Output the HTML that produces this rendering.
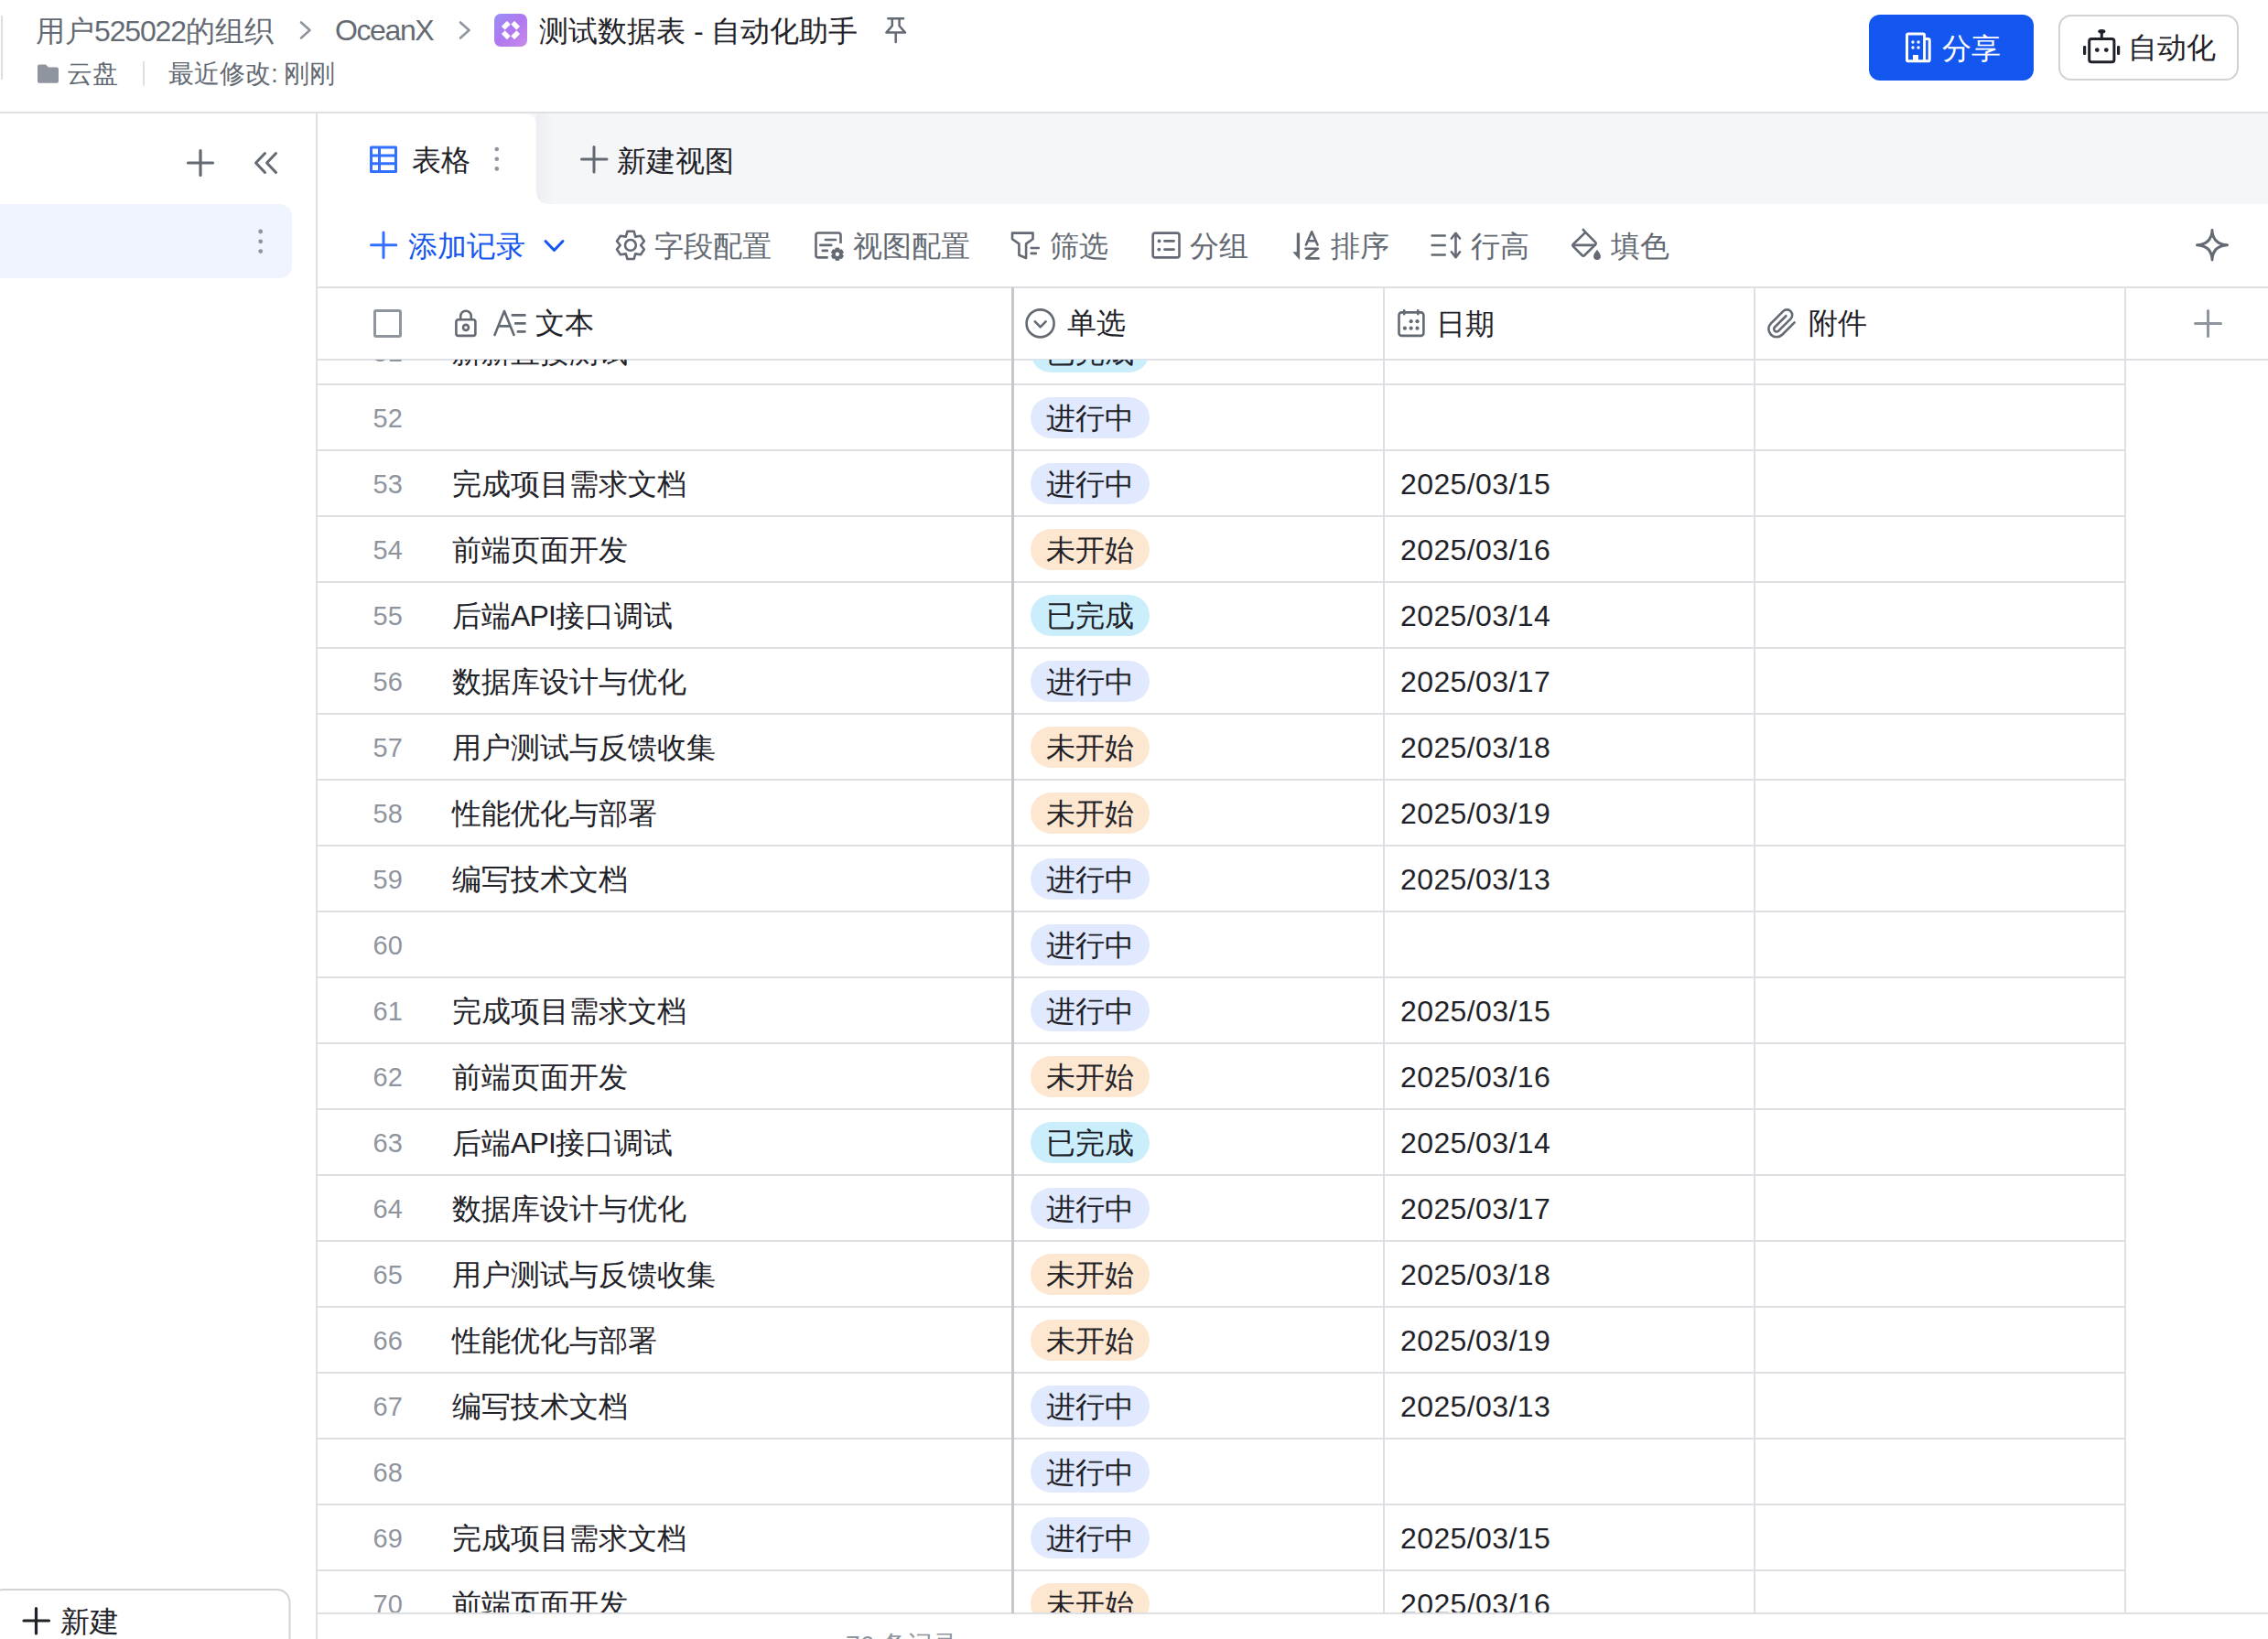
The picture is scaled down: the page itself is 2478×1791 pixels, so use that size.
<!DOCTYPE html>
<html><head><meta charset="utf-8">
<style>
html,body{margin:0;padding:0;background:#fff;}
body{width:2478px;height:1791px;position:relative;overflow:hidden;font-family:"Liberation Sans",sans-serif;}
.t{position:absolute;white-space:nowrap;}
svg{position:absolute;left:0;top:0;}
#bd{position:absolute;left:0;top:393px;width:2478px;height:1369px;overflow:hidden;}
.ln{position:absolute;left:347px;width:1975px;height:2px;background:#dee0e3;}
.tag{position:absolute;left:1125.5px;width:130.5px;height:45px;border-radius:22.5px;}
</style></head><body>
<svg width="2478" height="1791" viewBox="0 0 2478 1791">
<rect x="1" y="17" width="2" height="70" fill="#dee0e3"/><path d="M329 24.5 L338.5 33 L329 41.5" fill="none" stroke="#8f959e" stroke-width="2.6" stroke-linecap="round" stroke-linejoin="round"/><path d="M503 24.5 L512.5 33 L503 41.5" fill="none" stroke="#8f959e" stroke-width="2.6" stroke-linecap="round" stroke-linejoin="round"/><defs><linearGradient id="ag" x1="0" y1="0" x2="1" y2="1"><stop offset="0" stop-color="#9890f7"/><stop offset="0.5" stop-color="#b078f0"/><stop offset="1" stop-color="#c98aea"/></linearGradient></defs><rect x="540" y="15" width="36" height="36" rx="7" fill="url(#ag)"/><rect x="-4.3" y="-2.7" width="8.6" height="5.4" rx="0.6" fill="#fff" transform="translate(552.8 27.7) rotate(-45)"/><rect x="-4.3" y="-2.7" width="8.6" height="5.4" rx="0.6" fill="#fff" transform="translate(563.2 27.7) rotate(45)"/><rect x="-4.3" y="-2.7" width="8.6" height="5.4" rx="0.6" fill="#fff" transform="translate(552.8 38.3) rotate(45)"/><rect x="-4.3" y="-2.7" width="8.6" height="5.4" rx="0.6" fill="#fff" transform="translate(563.2 38.3) rotate(-45)"/><path d="M970.3 20.3 H987.1 M974.8 20.3 V28.2 L968.4 35.6 H989 L982.6 28.2 V20.3 M978.7 35.6 V46" fill="none" stroke="#646a73" stroke-width="2.5" stroke-linecap="round" stroke-linejoin="round"/><path d="M41 72.5 Q41 70.5 43 70.5 H50 L53 73.5 H62 Q64 73.5 64 75.5 V88.7 Q64 90.7 62 90.7 H43 Q41 90.7 41 88.7 Z" fill="#8f959e"/><rect x="156" y="67" width="2" height="26.5" fill="#dee0e3"/><rect x="2042" y="16" width="180" height="72" rx="12" fill="#1456f0"/><path d="M2083.5 66.8 V38.5 Q2083.5 36.9 2085.1 36.9 H2101 Q2102.6 36.9 2102.6 38.5 V66.8 M2102.6 42.5 H2106.6 Q2108.2 42.5 2108.2 44.1 V65.2 Q2108.2 66.8 2106.6 66.8 H2085.1 Q2083.5 66.8 2083.5 65.2" fill="none" stroke="#fff" stroke-width="3" stroke-linejoin="round"/><circle cx="2090" cy="46" r="1.7" fill="#fff"/><circle cx="2096" cy="46" r="1.7" fill="#fff"/><circle cx="2090" cy="52" r="1.7" fill="#fff"/><circle cx="2096" cy="52" r="1.7" fill="#fff"/><rect x="2090" y="60" width="6" height="7" fill="#fff"/><rect x="2250" y="17" width="195" height="70" rx="13" fill="#fff" stroke="#d0d3d6" stroke-width="2"/><rect x="2282.7" y="42.5" width="27.2" height="25.2" rx="2.5" fill="none" stroke="#1f2329" stroke-width="3"/><circle cx="2291.3" cy="54.6" r="2.4" fill="#1f2329"/><circle cx="2301.3" cy="54.6" r="2.4" fill="#1f2329"/><rect x="2294.8" y="35" width="3" height="7" fill="#1f2329"/><ellipse cx="2296.3" cy="34.3" rx="4" ry="2.4" fill="#1f2329"/><rect x="2276" y="50" width="3.2" height="10" rx="1.3" fill="#1f2329"/><rect x="2313" y="50" width="3.2" height="10" rx="1.3" fill="#1f2329"/><rect x="0" y="122" width="2478" height="2" fill="#dee0e3"/><rect x="345" y="124" width="2" height="1667" fill="#dee0e3"/><path d="M219 164.5 V191.5 M205.5 178 H232.5" fill="none" stroke="#646a73" stroke-width="3.2" stroke-linecap="round"/><path d="M289.5 167.5 L279.5 178 L289.5 188.5 M301.5 167.5 L291.5 178 L301.5 188.5" fill="none" stroke="#646a73" stroke-width="3" stroke-linecap="round" stroke-linejoin="round"/><rect x="-20" y="223" width="339" height="81" rx="13" fill="#eff4fe"/><circle cx="284.7" cy="253" r="2.4" fill="#8f959e"/><circle cx="284.7" cy="263.8" r="2.4" fill="#8f959e"/><circle cx="284.7" cy="274.6" r="2.4" fill="#8f959e"/><rect x="-10" y="1737" width="326.5" height="80" rx="14" fill="#fff" stroke="#d0d3d6" stroke-width="2"/><path d="M39.5 1757.5 V1785 M26 1771 H53.5" fill="none" stroke="#1f2329" stroke-width="3.2" stroke-linecap="round"/><defs><linearGradient id="sh" x1="0" y1="0" x2="1" y2="0"><stop offset="0" stop-color="#eceef1"/><stop offset="1" stop-color="#f5f6f7"/></linearGradient></defs><rect x="347" y="124" width="2131" height="99" fill="#f5f6f7"/><rect x="586" y="124" width="20" height="99" fill="url(#sh)"/><path d="M347 124 H571 Q586 124 586 139 V223 H347 Z" fill="#fff"/><path d="M586 208 Q586 223 601 223 H586 Z" fill="#fff"/><path d="M405.5 161 H432.5 V187.5 H405.5 Z M405.5 170 H432.5 M405.5 178.8 H432.5 M414.5 161 V187.5" fill="none" stroke="#3370ff" stroke-width="3" stroke-linejoin="round"/><circle cx="542.8" cy="163" r="2.3" fill="#8f959e"/><circle cx="542.8" cy="173.7" r="2.3" fill="#8f959e"/><circle cx="542.8" cy="184.4" r="2.3" fill="#8f959e"/><path d="M649 160.5 V188 M635.5 174 H663" fill="none" stroke="#646a73" stroke-width="3" stroke-linecap="round"/><path d="M419 254 V281.5 M405.5 267.8 H432.8" fill="none" stroke="#3370ff" stroke-width="3" stroke-linecap="round"/><path d="M596 263.5 L605.5 273.5 L615 263.5" fill="none" stroke="#1456f0" stroke-width="3" stroke-linecap="round" stroke-linejoin="round"/><rect x="347" y="313" width="2131" height="2" fill="#dee0e3"/><rect x="347" y="392" width="2131" height="2" fill="#dee0e3"/><rect x="409.5" y="339.5" width="28" height="28" rx="1.5" fill="none" stroke="#8f959e" stroke-width="3"/><path d="M2412.5 339.5 V367.5 M2398.5 353.5 H2426.5" fill="none" stroke="#8f959e" stroke-width="3" stroke-linecap="round"/><rect x="347" y="1762" width="2131" height="2" fill="#dee0e3"/>
</svg>
<div id="bd">
<div class="ln" style="top:26px"></div><div class="t" style="left:407.5px;top:-22px;font-size:29px;line-height:29px;color:#8f959e">51</div><div class="t" style="left:494px;top:-24px;font-size:32px;line-height:32px;color:#1f2329">新新直接测试</div><div class="tag" style="top:-31px;background:#caeefb"></div><div class="t" style="left:1143px;top:-24px;font-size:32px;line-height:32px;color:#1f2329">已完成</div><div class="ln" style="top:98px"></div><div class="t" style="left:407.5px;top:50px;font-size:29px;line-height:29px;color:#8f959e">52</div><div class="tag" style="top:41px;background:#e0e9fd"></div><div class="t" style="left:1143px;top:48px;font-size:32px;line-height:32px;color:#1f2329">进行中</div><div class="ln" style="top:170px"></div><div class="t" style="left:407.5px;top:122px;font-size:29px;line-height:29px;color:#8f959e">53</div><div class="t" style="left:494px;top:120px;font-size:32px;line-height:32px;color:#1f2329">完成项目需求文档</div><div class="tag" style="top:113px;background:#e0e9fd"></div><div class="t" style="left:1143px;top:120px;font-size:32px;line-height:32px;color:#1f2329">进行中</div><div class="t" style="left:1530px;top:120px;font-size:32px;line-height:32px;letter-spacing:0.4px;color:#1f2329">2025/03/15</div><div class="ln" style="top:242px"></div><div class="t" style="left:407.5px;top:194px;font-size:29px;line-height:29px;color:#8f959e">54</div><div class="t" style="left:494px;top:192px;font-size:32px;line-height:32px;color:#1f2329">前端页面开发</div><div class="tag" style="top:185px;background:#fee7d0"></div><div class="t" style="left:1143px;top:192px;font-size:32px;line-height:32px;color:#1f2329">未开始</div><div class="t" style="left:1530px;top:192px;font-size:32px;line-height:32px;letter-spacing:0.4px;color:#1f2329">2025/03/16</div><div class="ln" style="top:314px"></div><div class="t" style="left:407.5px;top:266px;font-size:29px;line-height:29px;color:#8f959e">55</div><div class="t" style="left:494px;top:264px;font-size:32px;line-height:32px;color:#1f2329">后端<span style="letter-spacing:-0.9px">API</span>接口调试</div><div class="tag" style="top:257px;background:#caeefb"></div><div class="t" style="left:1143px;top:264px;font-size:32px;line-height:32px;color:#1f2329">已完成</div><div class="t" style="left:1530px;top:264px;font-size:32px;line-height:32px;letter-spacing:0.4px;color:#1f2329">2025/03/14</div><div class="ln" style="top:386px"></div><div class="t" style="left:407.5px;top:338px;font-size:29px;line-height:29px;color:#8f959e">56</div><div class="t" style="left:494px;top:336px;font-size:32px;line-height:32px;color:#1f2329">数据库设计与优化</div><div class="tag" style="top:329px;background:#e0e9fd"></div><div class="t" style="left:1143px;top:336px;font-size:32px;line-height:32px;color:#1f2329">进行中</div><div class="t" style="left:1530px;top:336px;font-size:32px;line-height:32px;letter-spacing:0.4px;color:#1f2329">2025/03/17</div><div class="ln" style="top:458px"></div><div class="t" style="left:407.5px;top:410px;font-size:29px;line-height:29px;color:#8f959e">57</div><div class="t" style="left:494px;top:408px;font-size:32px;line-height:32px;color:#1f2329">用户测试与反馈收集</div><div class="tag" style="top:401px;background:#fee7d0"></div><div class="t" style="left:1143px;top:408px;font-size:32px;line-height:32px;color:#1f2329">未开始</div><div class="t" style="left:1530px;top:408px;font-size:32px;line-height:32px;letter-spacing:0.4px;color:#1f2329">2025/03/18</div><div class="ln" style="top:530px"></div><div class="t" style="left:407.5px;top:482px;font-size:29px;line-height:29px;color:#8f959e">58</div><div class="t" style="left:494px;top:480px;font-size:32px;line-height:32px;color:#1f2329">性能优化与部署</div><div class="tag" style="top:473px;background:#fee7d0"></div><div class="t" style="left:1143px;top:480px;font-size:32px;line-height:32px;color:#1f2329">未开始</div><div class="t" style="left:1530px;top:480px;font-size:32px;line-height:32px;letter-spacing:0.4px;color:#1f2329">2025/03/19</div><div class="ln" style="top:602px"></div><div class="t" style="left:407.5px;top:554px;font-size:29px;line-height:29px;color:#8f959e">59</div><div class="t" style="left:494px;top:552px;font-size:32px;line-height:32px;color:#1f2329">编写技术文档</div><div class="tag" style="top:545px;background:#e0e9fd"></div><div class="t" style="left:1143px;top:552px;font-size:32px;line-height:32px;color:#1f2329">进行中</div><div class="t" style="left:1530px;top:552px;font-size:32px;line-height:32px;letter-spacing:0.4px;color:#1f2329">2025/03/13</div><div class="ln" style="top:674px"></div><div class="t" style="left:407.5px;top:626px;font-size:29px;line-height:29px;color:#8f959e">60</div><div class="tag" style="top:617px;background:#e0e9fd"></div><div class="t" style="left:1143px;top:624px;font-size:32px;line-height:32px;color:#1f2329">进行中</div><div class="ln" style="top:746px"></div><div class="t" style="left:407.5px;top:698px;font-size:29px;line-height:29px;color:#8f959e">61</div><div class="t" style="left:494px;top:696px;font-size:32px;line-height:32px;color:#1f2329">完成项目需求文档</div><div class="tag" style="top:689px;background:#e0e9fd"></div><div class="t" style="left:1143px;top:696px;font-size:32px;line-height:32px;color:#1f2329">进行中</div><div class="t" style="left:1530px;top:696px;font-size:32px;line-height:32px;letter-spacing:0.4px;color:#1f2329">2025/03/15</div><div class="ln" style="top:818px"></div><div class="t" style="left:407.5px;top:770px;font-size:29px;line-height:29px;color:#8f959e">62</div><div class="t" style="left:494px;top:768px;font-size:32px;line-height:32px;color:#1f2329">前端页面开发</div><div class="tag" style="top:761px;background:#fee7d0"></div><div class="t" style="left:1143px;top:768px;font-size:32px;line-height:32px;color:#1f2329">未开始</div><div class="t" style="left:1530px;top:768px;font-size:32px;line-height:32px;letter-spacing:0.4px;color:#1f2329">2025/03/16</div><div class="ln" style="top:890px"></div><div class="t" style="left:407.5px;top:842px;font-size:29px;line-height:29px;color:#8f959e">63</div><div class="t" style="left:494px;top:840px;font-size:32px;line-height:32px;color:#1f2329">后端<span style="letter-spacing:-0.9px">API</span>接口调试</div><div class="tag" style="top:833px;background:#caeefb"></div><div class="t" style="left:1143px;top:840px;font-size:32px;line-height:32px;color:#1f2329">已完成</div><div class="t" style="left:1530px;top:840px;font-size:32px;line-height:32px;letter-spacing:0.4px;color:#1f2329">2025/03/14</div><div class="ln" style="top:962px"></div><div class="t" style="left:407.5px;top:914px;font-size:29px;line-height:29px;color:#8f959e">64</div><div class="t" style="left:494px;top:912px;font-size:32px;line-height:32px;color:#1f2329">数据库设计与优化</div><div class="tag" style="top:905px;background:#e0e9fd"></div><div class="t" style="left:1143px;top:912px;font-size:32px;line-height:32px;color:#1f2329">进行中</div><div class="t" style="left:1530px;top:912px;font-size:32px;line-height:32px;letter-spacing:0.4px;color:#1f2329">2025/03/17</div><div class="ln" style="top:1034px"></div><div class="t" style="left:407.5px;top:986px;font-size:29px;line-height:29px;color:#8f959e">65</div><div class="t" style="left:494px;top:984px;font-size:32px;line-height:32px;color:#1f2329">用户测试与反馈收集</div><div class="tag" style="top:977px;background:#fee7d0"></div><div class="t" style="left:1143px;top:984px;font-size:32px;line-height:32px;color:#1f2329">未开始</div><div class="t" style="left:1530px;top:984px;font-size:32px;line-height:32px;letter-spacing:0.4px;color:#1f2329">2025/03/18</div><div class="ln" style="top:1106px"></div><div class="t" style="left:407.5px;top:1058px;font-size:29px;line-height:29px;color:#8f959e">66</div><div class="t" style="left:494px;top:1056px;font-size:32px;line-height:32px;color:#1f2329">性能优化与部署</div><div class="tag" style="top:1049px;background:#fee7d0"></div><div class="t" style="left:1143px;top:1056px;font-size:32px;line-height:32px;color:#1f2329">未开始</div><div class="t" style="left:1530px;top:1056px;font-size:32px;line-height:32px;letter-spacing:0.4px;color:#1f2329">2025/03/19</div><div class="ln" style="top:1178px"></div><div class="t" style="left:407.5px;top:1130px;font-size:29px;line-height:29px;color:#8f959e">67</div><div class="t" style="left:494px;top:1128px;font-size:32px;line-height:32px;color:#1f2329">编写技术文档</div><div class="tag" style="top:1121px;background:#e0e9fd"></div><div class="t" style="left:1143px;top:1128px;font-size:32px;line-height:32px;color:#1f2329">进行中</div><div class="t" style="left:1530px;top:1128px;font-size:32px;line-height:32px;letter-spacing:0.4px;color:#1f2329">2025/03/13</div><div class="ln" style="top:1250px"></div><div class="t" style="left:407.5px;top:1202px;font-size:29px;line-height:29px;color:#8f959e">68</div><div class="tag" style="top:1193px;background:#e0e9fd"></div><div class="t" style="left:1143px;top:1200px;font-size:32px;line-height:32px;color:#1f2329">进行中</div><div class="ln" style="top:1322px"></div><div class="t" style="left:407.5px;top:1274px;font-size:29px;line-height:29px;color:#8f959e">69</div><div class="t" style="left:494px;top:1272px;font-size:32px;line-height:32px;color:#1f2329">完成项目需求文档</div><div class="tag" style="top:1265px;background:#e0e9fd"></div><div class="t" style="left:1143px;top:1272px;font-size:32px;line-height:32px;color:#1f2329">进行中</div><div class="t" style="left:1530px;top:1272px;font-size:32px;line-height:32px;letter-spacing:0.4px;color:#1f2329">2025/03/15</div><div class="ln" style="top:1394px"></div><div class="t" style="left:407.5px;top:1346px;font-size:29px;line-height:29px;color:#8f959e">70</div><div class="t" style="left:494px;top:1344px;font-size:32px;line-height:32px;color:#1f2329">前端页面开发</div><div class="tag" style="top:1337px;background:#fee7d0"></div><div class="t" style="left:1143px;top:1344px;font-size:32px;line-height:32px;color:#1f2329">未开始</div><div class="t" style="left:1530px;top:1344px;font-size:32px;line-height:32px;letter-spacing:0.4px;color:#1f2329">2025/03/16</div>
</div>
<svg width="2478" height="1791" viewBox="0 0 2478 1791" style="pointer-events:none">
<rect x="1105" y="314" width="3" height="1449" fill="#c4c7cc"/><rect x="1511" y="314" width="2" height="1449" fill="#dee0e3"/><rect x="1916" y="314" width="2" height="1449" fill="#dee0e3"/><rect x="2321" y="314" width="2" height="1449" fill="#dee0e3"/><g fill="none" stroke="#646a73" stroke-width="2.6" stroke-linecap="round" stroke-linejoin="round">
<!-- gear -->
<path d="M685.5 252.8 H692.7 L694.2 258.6 L700 257.8 L703.8 263.5 L700.2 268 L703.8 272.5 L700 278.2 L694.2 277.4 L692.7 283 H685.5 L683.8 277.4 L677.9 278.2 L674 272.5 L677.7 268 L674 263.5 L677.9 257.8 L683.8 258.6 Z"/>
<circle cx="688.9" cy="267.9" r="5.9"/>
<!-- view config -->
<path stroke-linecap="butt" d="M904.7 281.4 H894 Q891.5 281.4 891.5 278.9 V257 Q891.5 254.5 894 254.5 H916 Q918.5 254.5 918.5 257 V266.1"/>
<path d="M901.9 262 H913 M896.3 267.9 H908.2 M898.8 273.9 H903.9"/>
<!-- filter -->
<path d="M1106 254.6 H1128.5 V261.3 L1121.1 266.4 V282 L1113.4 278.8 V266.4 L1106 261.3 Z"/>
<path d="M1126.7 271 H1134.8 M1126.7 276.9 H1131.8"/>
<!-- group -->
<rect x="1259.65" y="254.6" width="28.85" height="26.8" rx="2.5"/>
<path d="M1272.4 263.4 H1282.6 M1272.4 272.6 H1282.6"/>
<!-- sort -->
<path d="M1427 267.6 L1433.2 253.3 L1439.5 267.6 M1428.8 263.3 H1437.7"/>
<path d="M1426.5 271.8 H1439.8 L1427.2 282.4 H1440.6"/>
<!-- row height -->
<path d="M1564.7 257.5 H1578.7 M1564.7 268 H1578.7 M1564.7 278.5 H1578.7"/>
<path d="M1590.5 255.5 V280.5 M1585.9 260.5 L1590.5 254.8 L1595 260.5 M1585.9 275.3 L1590.5 281.2 L1595 275.3"/>
<!-- fill -->
<path d="M1729.8 251 L1732.3 253.9 L1743 264.6 Q1744.4 265.9 1743 267.3 L1731.2 279 Q1729.9 280.3 1728.6 279 L1719 269.4 Q1717.6 268 1719 266.7 L1732.3 253.9"/>
<path d="M1719.5 267.9 H1742.5"/>
<!-- sparkle -->
<path stroke-width="2.9" d="M2417 251.4 Q2417.6 266.9 2433.6 267.7 Q2417.6 268.5 2417 284 Q2416.4 268.5 2400.4 267.7 Q2416.4 266.9 2417 251.4 Z"/>
<!-- lock -->
<rect x="498.4" y="349.3" width="21" height="17.6" rx="2.5"/>
<path d="M503.2 349 V345.5 A5.8 5.8 0 0 1 514.8 345.5 V349"/>
<circle cx="509" cy="357.9" r="3"/>
<!-- A= -->
<path d="M540.5 366 L551 340 L561.5 366 M544.5 356.4 H557.5"/>
<path d="M559.8 344.4 H573.5 M563.2 353.4 H573.5 M565.8 362.4 H573.5"/>
<!-- radio -->
<circle cx="1136.6" cy="353.4" r="15"/>
<path d="M1130.8 351.3 L1136.7 357.3 L1142.6 351.3"/>
<!-- calendar -->
<rect x="1528.5" y="341.4" width="26.9" height="25.5" rx="3"/>
<path d="M1534.2 339.3 V343.3 M1549.3 339.3 V343.3"/>
<!-- clip -->
<path transform="translate(1929.5 336.4) scale(1.45)" stroke-width="1.8" d="M21.44 11.05l-9.19 9.19a6 6 0 0 1-8.49-8.49l9.19-9.19a4 4 0 0 1 5.66 5.66l-9.2 9.19a2 2 0 0 1-2.83-2.83l8.49-8.48"/>
</g>
<g fill="#646a73">
<path d="M1745 272.8 C1743.6 275 1741.1 277.6 1741.1 280 A3.9 3.9 0 0 0 1748.9 280 C1748.9 277.6 1746.4 275 1745 272.8 Z"/>
<circle cx="1266.5" cy="263.4" r="1.9"/><circle cx="1266.3" cy="272.6" r="1.9"/>
<path d="M1416.8 254.4 H1420.1 V284 L1412.3 275.2 H1416.8 Z"/>
<circle cx="1541.7" cy="351.2" r="2.1"/><circle cx="1548.5" cy="351.2" r="2.1"/>
<circle cx="1534.9" cy="358.7" r="2.1"/><circle cx="1541.7" cy="358.7" r="2.1"/><circle cx="1548.5" cy="358.7" r="2.1"/>
<!-- small gear of view config -->
<g transform="translate(914.9 277.7)">
<path d="M-1.8 -6.8 H1.8 L2.6 -4.6 L4.9 -5 L6.7 -1.9 L5.2 0 L6.7 1.9 L4.9 5 L2.6 4.6 L1.8 6.8 H-1.8 L-2.6 4.6 L-4.9 5 L-6.7 1.9 L-5.2 0 L-6.7 -1.9 L-4.9 -5 L-2.6 -4.6 Z" stroke="#646a73" stroke-width="0.6" stroke-linejoin="round"/>
<circle r="2.2" fill="#fff"/>
</g>
</g>

</svg>
<div class="t" style="left:39px;top:18px;font-size:32px;line-height:32px;color:#646a73;">用户<span style="letter-spacing:-1.15px">525022</span>的组织</div><div class="t" style="left:366px;top:17px;font-size:32px;line-height:32px;color:#646a73;letter-spacing:-1.4px">OceanX</div><div class="t" style="left:589px;top:18px;font-size:32px;line-height:32px;color:#1f2329;">测试数据表 - 自动化助手</div><div class="t" style="left:73px;top:67px;font-size:28px;line-height:28px;color:#646a73;">云盘</div><div class="t" style="left:184px;top:67px;font-size:28px;line-height:28px;color:#646a73;">最近修改<span style="letter-spacing:-1px">: </span>刚刚</div><div class="t" style="left:2122px;top:37px;font-size:32px;line-height:32px;color:#fff;">分享</div><div class="t" style="left:2325px;top:36px;font-size:32px;line-height:32px;color:#1f2329;">自动化</div><div class="t" style="left:66px;top:1756px;font-size:32px;line-height:32px;color:#1f2329;">新建</div><div class="t" style="left:450px;top:159px;font-size:32px;line-height:32px;color:#1f2329;">表格</div><div class="t" style="left:674px;top:160px;font-size:32px;line-height:32px;color:#1f2329;">新建视图</div><div class="t" style="left:446px;top:253px;font-size:32px;line-height:32px;color:#1456f0;">添加记录</div><div class="t" style="left:715px;top:253px;font-size:32px;line-height:32px;color:#646a73;">字段配置</div><div class="t" style="left:932px;top:253px;font-size:32px;line-height:32px;color:#646a73;">视图配置</div><div class="t" style="left:1147px;top:253px;font-size:32px;line-height:32px;color:#646a73;">筛选</div><div class="t" style="left:1300px;top:253px;font-size:32px;line-height:32px;color:#646a73;">分组</div><div class="t" style="left:1454px;top:253px;font-size:32px;line-height:32px;color:#646a73;">排序</div><div class="t" style="left:1607px;top:253px;font-size:32px;line-height:32px;color:#646a73;">行高</div><div class="t" style="left:1760px;top:253px;font-size:32px;line-height:32px;color:#646a73;">填色</div><div class="t" style="left:585px;top:337px;font-size:32px;line-height:32px;color:#1f2329;">文本</div><div class="t" style="left:1166px;top:337px;font-size:32px;line-height:32px;color:#1f2329;">单选</div><div class="t" style="left:1569px;top:338px;font-size:32px;line-height:32px;color:#1f2329;">日期</div><div class="t" style="left:1976px;top:337px;font-size:32px;line-height:32px;color:#1f2329;">附件</div><div class="t" style="left:924px;top:1784px;font-size:28px;line-height:28px;color:#8f959e;">76 条记录</div>
</body></html>
